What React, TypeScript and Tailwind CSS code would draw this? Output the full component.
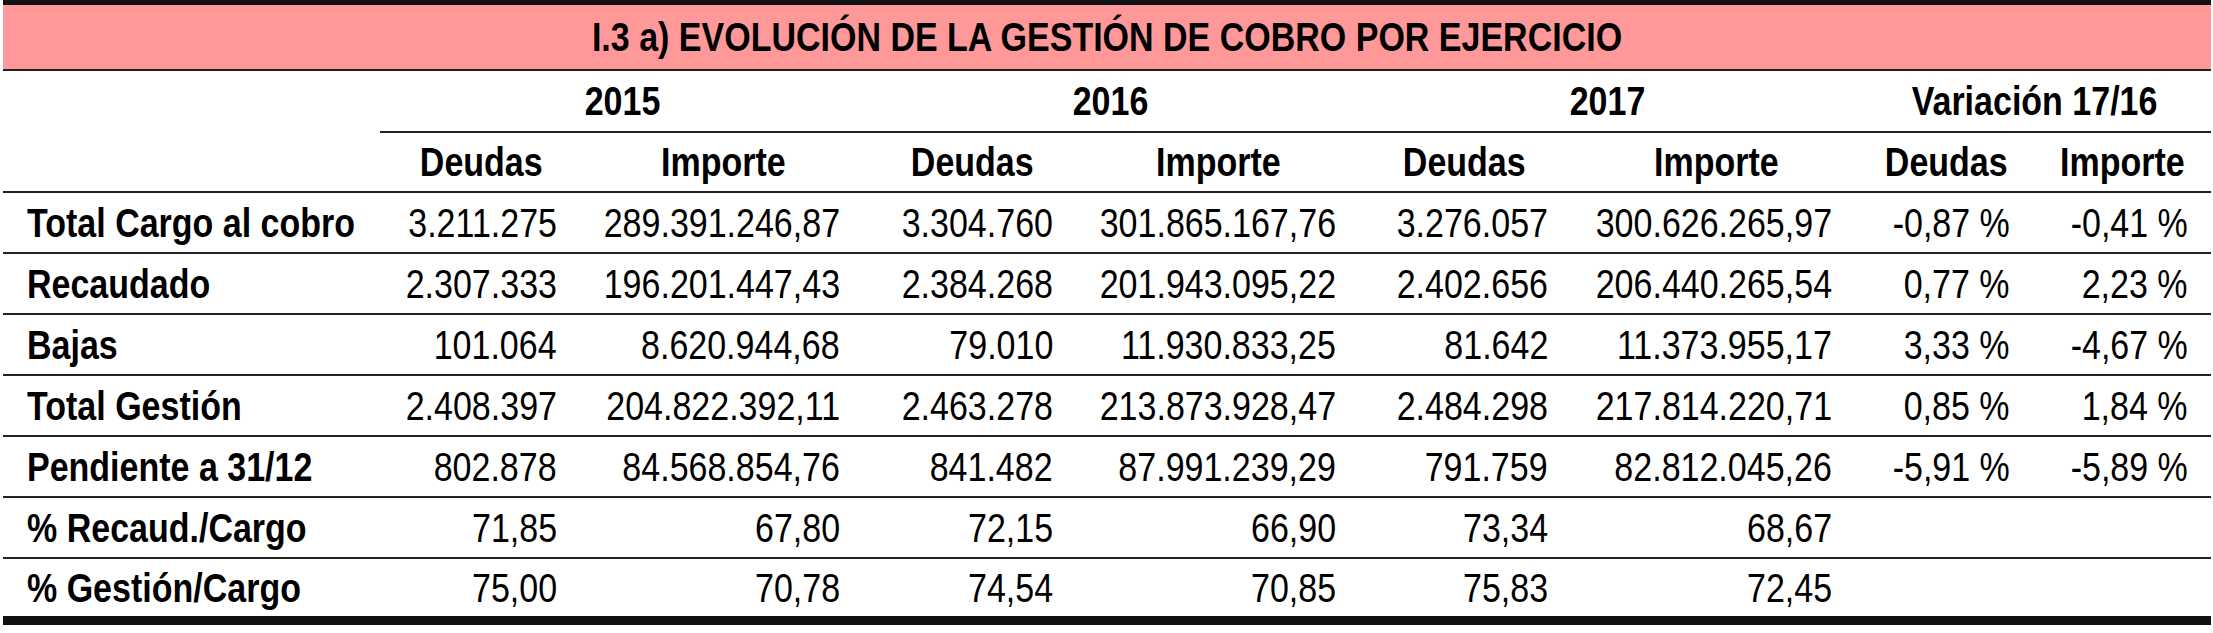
import React from "react";

const COLS = "grid-cols-[377px_202px_282px_216px_276px_217px_286px_175px_177px]";

type Row = { label: string; values: string[] };

const rows: Row[] = [
  { label: "Total Cargo al cobro", values: ["3.211.275", "289.391.246,87", "3.304.760", "301.865.167,76", "3.276.057", "300.626.265,97", "-0,87 %", "-0,41 %"] },
  { label: "Recaudado", values: ["2.307.333", "196.201.447,43", "2.384.268", "201.943.095,22", "2.402.656", "206.440.265,54", "0,77 %", "2,23 %"] },
  { label: "Bajas", values: ["101.064", "8.620.944,68", "79.010", "11.930.833,25", "81.642", "11.373.955,17", "3,33 %", "-4,67 %"] },
  { label: "Total Gestión", values: ["2.408.397", "204.822.392,11", "2.463.278", "213.873.928,47", "2.484.298", "217.814.220,71", "0,85 %", "1,84 %"] },
  { label: "Pendiente a 31/12", values: ["802.878", "84.568.854,76", "841.482", "87.991.239,29", "791.759", "82.812.045,26", "-5,91 %", "-5,89 %"] },
  { label: "% Recaud./Cargo", values: ["71,85", "67,80", "72,15", "66,90", "73,34", "68,67", "", ""] },
  { label: "% Gestión/Cargo", values: ["75,00", "70,78", "74,54", "70,85", "75,83", "72,45", "", ""] },
];

const pads = ["pr-[25px]", "pr-[24px]", "pr-[27px]", "pr-[20px]", "pr-[25px]", "pr-[27px]", "pr-[24px]", "pr-[23px]"];

function N({ children, origin }: { children: React.ReactNode; origin: "left" | "right" | "center" }) {
  const o = origin === "left" ? "origin-left" : origin === "right" ? "origin-right" : "origin-center";
  return <span className={`inline-block whitespace-nowrap scale-x-[0.85] ${o}`}>{children}</span>;
}

export default function App() {
  return (
    <div
      className="w-[2213px] h-[633px] bg-white text-black pl-[3px] pr-[2px] overflow-hidden"
      style={{ fontFamily: '"Liberation Sans", Arial, sans-serif' }}
    >
      <div className="border-t-[5px] border-[#111]">
        <div className="h-[66px] bg-[#ff9999] flex items-center justify-center text-[40px] font-bold leading-none border-b-[2px] border-[#222]">
          <N origin="center">I.3 a) EVOLUCIÓN DE LA GESTIÓN DE COBRO POR EJERCICIO</N>
        </div>

        <div className={`grid ${COLS} h-[62px]`}>
          <div />
          {["2015", "2016", "2017", "Variación 17/16"].map((y) => (
            <div key={y} className="col-span-2 flex items-center justify-center text-[40px] font-bold leading-none border-b-[2px] border-[#222]">
              <N origin="center">{y}</N>
            </div>
          ))}
        </div>

        <div className={`grid ${COLS} h-[60px] border-b-[2px] border-[#222]`}>
          <div />
          {["Deudas", "Importe", "Deudas", "Importe", "Deudas", "Importe", "Deudas", "Importe"].map((h, i) => (
            <div key={i} className="flex items-center justify-center text-[40px] font-bold leading-none">
              <N origin="center">{h}</N>
            </div>
          ))}
        </div>

        {rows.map((r, ri) => {
          const last = ri === rows.length - 1;
          return (
            <div
              key={r.label}
              className={`grid ${COLS} ${last ? "h-[66px] border-b-[9px] border-[#111]" : "h-[61px] border-b-[2px] border-[#222]"}`}
            >
              <div className="flex items-center pl-[24px] text-[40px] font-bold leading-none">
                <N origin="left">{r.label}</N>
              </div>
              {r.values.map((v, i) => (
                <div key={i} className={`flex items-center justify-end ${pads[i]} text-[40px] leading-none`}>
                  <N origin="right">{v}</N>
                </div>
              ))}
            </div>
          );
        })}
      </div>
    </div>
  );
}
